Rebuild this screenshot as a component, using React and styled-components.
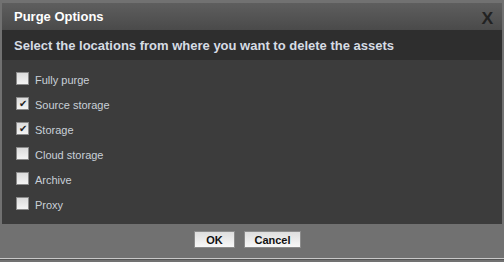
import React, { useState } from 'react';
import styled, { createGlobalStyle } from 'styled-components';

const GlobalStyle = createGlobalStyle`
  html, body {
    margin: 0;
    padding: 0;
    background: #6f6f6f;
    font-family: "Liberation Sans", Arial, sans-serif;
  }
  * { box-sizing: border-box; }
`;

const options = [
  { id: 'full', label: 'Fully purge', checked: false },
  { id: 'source', label: 'Source storage', checked: true },
  { id: 'storage', label: 'Storage', checked: true },
  { id: 'cloud', label: 'Cloud storage', checked: false },
  { id: 'archive', label: 'Archive', checked: false },
  { id: 'proxy', label: 'Proxy', checked: false },
];

const PurgeDialog = () => {
  const [items, setItems] = useState(options);

  const toggle = (id) => {
    setItems(items.map((i) => (i.id === id ? { ...i, checked: !i.checked } : i)));
  };

  return (
    <Dialog>
      <TitleBar>
        <h2>Purge Options</h2>
        <Close>X</Close>
      </TitleBar>
      <SubHeader>Select the locations from where you want to delete the assets</SubHeader>
      <Body>
        {items.map((item) => (
          <Row key={item.id} onClick={() => toggle(item.id)}>
            <Box>{item.checked && <Tick>✔</Tick>}</Box>
            <Label>{item.label}</Label>
          </Row>
        ))}
      </Body>
      <Footer>
        <Button $w={41}>OK</Button>
        <Button $w={57}>Cancel</Button>
      </Footer>
      <BottomEdge />
    </Dialog>
  );
};

export default function App() {
  return (
    <>
      <GlobalStyle />
      <PurgeDialog />
    </>
  );
}

const Dialog = styled.div`
  width: 504px;
  height: 262px;
  background: #717171;
  padding: 3px 2px 0 2px;
  display: flex;
  flex-direction: column;
`;

const TitleBar = styled.div`
  height: 27px;
  display: flex;
  align-items: center;
  justify-content: space-between;
  padding: 0 9px 0 12px;
  background: linear-gradient(#5e5e5e, #4a4a4a);
  h2 {
    margin: 0;
    font-size: 13px;
    font-weight: bold;
    color: #ffffff;
  }
`;

const Close = styled.span`
  font-size: 16px;
  font-weight: bold;
  color: #222;
  margin-top: 5px;
  transform: scaleX(1.1);
`;

const SubHeader = styled.div`
  height: 30px;
  display: flex;
  align-items: center;
  padding: 0 12px;
  background: #2e2e2e;
  font-size: 13px;
  font-weight: bold;
  color: #d6dce4;
`;

const Body = styled.div`
  height: 164px;
  background: #3c3c3c;
  padding: 12px 0 0 14px;
  display: flex;
  flex-direction: column;
  gap: 12px;
`;

const Row = styled.label`
  display: flex;
  align-items: center;
  height: 13px;
  font-size: 11px;
  color: #c9d0d8;
  cursor: pointer;
`;

const Label = styled.span`
  margin-left: 6px;
  margin-top: 3px;
`;

const Box = styled.span`
  width: 13px;
  height: 13px;
  flex: none;
  border: 1px solid #8a8a8a;
  background: linear-gradient(#dcdcdc, #f4f4f4);
  display: flex;
  align-items: center;
  justify-content: center;
`;

const Tick = styled.span`
  font-size: 10px;
  line-height: 1;
  color: #222;
`;

const Footer = styled.div`
  height: 34px;
  display: flex;
  justify-content: center;
  align-items: center;
  gap: 9px;
  padding: 0 9px 3px 0;
`;

const Button = styled.button`
  width: ${(p) => p.$w}px;
  height: 17px;
  padding: 0;
  border: 1px solid #8c8c8c;
  background: linear-gradient(#dedede, #f8f8f8);
  font-family: "Liberation Sans", Arial, sans-serif;
  font-size: 11px;
  font-weight: bold;
  color: #111;
  cursor: pointer;
`;

const BottomEdge = styled.div`
  margin: 0 -2px;
  height: 1px;
  background: #c8c8c8;
  box-shadow: 0 1px 0 #555;
`;
